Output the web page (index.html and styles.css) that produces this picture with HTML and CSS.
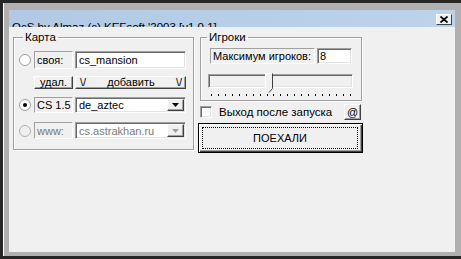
FILE: index.html
```html
<!DOCTYPE html>
<html lang="ru">
<head>
    <meta charset="UTF-8">
    <title>OcS by Almaz</title>
    <link rel="stylesheet" href="styles.css">
</head>
<body>
    <div class="window">
        <div class="titlebar">
            <span class="title">OcS by Almaz (c) KEFsoft '2003 [v1.0.1]</span>
            <span class="close">
                <svg width="8" height="7" viewBox="0 0 8 7"><path d="M0.5 0.5 L7.5 6.5 M7.5 0.5 L0.5 6.5" stroke="#000" stroke-width="1.7"/></svg>
            </span>
        </div>

        <div class="client">
            <fieldset class="group map">
                <legend>Карта</legend>
                <div class="row r1">
                    <svg class="radio" viewBox="0 0 12 12"><circle cx="6" cy="6" r="5.5" fill="#fff" stroke="#9a9a9a"/></svg>
                    <span class="static">своя:</span>
                    <span class="edit">cs_mansion</span>
                </div>
                <div class="row r2">
                    <span class="btn small">удал.</span>
                    <span class="btn wide"><span>\/</span><span>добавить</span><span>\/</span></span>
                </div>
                <div class="row r3">
                    <svg class="radio" viewBox="0 0 12 12"><circle cx="6" cy="6" r="5.5" fill="#fff" stroke="#9a9a9a"/><circle cx="6" cy="6" r="2" fill="#000"/></svg>
                    <span class="static">CS 1.5</span>
                    <span class="edit combo">de_aztec
                        <span class="drop"><svg width="7" height="4" viewBox="0 0 7 4"><polygon points="0,0 7,0 3.5,4" fill="#000"/></svg></span>
                    </span>
                </div>
                <div class="row r4 dis">
                    <svg class="radio" viewBox="0 0 12 12"><circle cx="6" cy="6" r="5.5" fill="#f0f0f0" stroke="#b0b0b0"/></svg>
                    <span class="static">www:</span>
                    <span class="edit combo">cs.astrakhan.ru
                        <span class="drop"><svg width="7" height="4" viewBox="0 0 7 4"><polygon points="0,0 7,0 3.5,4" fill="#a0a0a0"/></svg></span>
                    </span>
                </div>
            </fieldset>

            <div class="side">
                <fieldset class="group players">
                    <legend>Игроки</legend>
                    <div class="row max">
                        <span class="static">Максимум игроков:</span>
                        <span class="edit">8</span>
                    </div>
                    <div class="slider">
                        <svg class="thumb" width="8" height="20" viewBox="0 0 8 20">
                            <polygon points="0.5,0.5 7.5,0.5 7.5,15.5 4,19.5 0.5,15.5" fill="#f0f0f0"/>
                            <path d="M0.5 15.5 V0.5 H7" stroke="#fff" fill="none"/>
                            <path d="M7.5 0.5 V15.5 L4 19.5" stroke="#404040" fill="none"/>
                        </svg>
                    </div>
                    <div class="ticks">
                        <i></i><i></i><i></i><i></i><i></i><i></i><i></i><i></i><i></i><i></i><i></i>
                        <i></i><i></i><i></i><i></i><i></i><i></i><i></i><i></i><i></i><i></i>
                    </div>
                </fieldset>

                <div class="exit-row">
                    <span class="check"></span>
                    <span class="exit-label">Выход после запуска</span>
                    <span class="btn at">@</span>
                </div>

                <div class="go"><span class="focus">ПОЕХАЛИ</span></div>
            </div>
        </div>
    </div>
</body>
</html>
```

FILE: styles.css
```css
body {
    margin: 0;
    height: 259px;
    overflow: hidden;
    background-color: #262626;
    font-family: 'Liberation Sans', Arial, sans-serif;
    font-size: 11px;
    color: #000;
}

.window {
    margin: 3px 0 0 3px;
    height: 253px;
    box-sizing: border-box;
    border-left: 1px solid #fff;
    background-color: #b0b0b0;
    padding: 7px 6px 4px 5px;
    display: flex;
    flex-direction: column;
}

.titlebar {
    height: 17px;
    overflow: hidden;
    display: flex;
    align-items: flex-start;
    background: linear-gradient(90deg, #b1c9e4, #bcd3ea);
}

.title {
    flex: 1;
    padding: 13px 0 0 3px;
    font-size: 11.5px;
    line-height: 8px;
    white-space: nowrap;
}

.close {
    margin: 4px 3px 0 0;
    width: 16px;
    height: 11px;
    box-sizing: border-box;
    background-color: #eef1f4;
    border: 1px solid;
    border-color: #fff #404040 #404040 #fff;
    display: flex;
    align-items: center;
    justify-content: center;
}

.client {
    flex: 1;
    background-color: #f0f0f0;
    padding: 4px 0 0 4px;
    display: grid;
    grid-template-columns: 181px 165px;
    column-gap: 4px;
    align-items: start;
}

.group {
    margin: 0;
    padding: 0;
    min-width: 0;
    border: 1px solid #a0a0a0;
    box-shadow: 1px 1px 0 #fff, inset 1px 1px 0 #fff;
}

legend {
    padding: 0 2px;
    font-size: 11.5px;
    line-height: 12px;
}

.map legend {
    margin-left: 9px;
}

.row {
    display: flex;
    align-items: stretch;
}

.r1 { margin-top: 8px; height: 18px; }
.r2 { margin-top: 7px; height: 13px; padding-left: 20px; }
.r3 { margin-top: 8px; height: 16px; }
.r4 { margin-top: 9px; height: 17px; margin-bottom: 10px; }

.radio {
    align-self: center;
    width: 12px;
    height: 12px;
    margin: 0 3px 0 5px;
    flex: none;
}

.static {
    width: 39px;
    box-sizing: border-box;
    border: 1px solid;
    border-color: #a0a0a0 #fff #fff #a0a0a0;
    padding-left: 2px;
    margin-right: 2px;
    display: flex;
    align-items: center;
    white-space: nowrap;
    overflow: hidden;
}

.edit {
    width: 111px;
    box-sizing: border-box;
    background-color: #fff;
    border: 1px solid;
    border-color: #a0a0a0 #fff #fff #a0a0a0;
    box-shadow: inset 1px 1px 0 #696969, inset -1px -1px 0 #e3e3e3;
    padding-left: 3px;
    display: flex;
    align-items: center;
    white-space: nowrap;
}

.drop {
    margin: 1px 1px 1px auto;
    align-self: stretch;
    width: 17px;
    box-sizing: border-box;
    background-color: #f0f0f0;
    border: 1px solid;
    border-color: #fff #404040 #404040 #fff;
    box-shadow: inset -1px -1px 0 #a0a0a0;
    display: flex;
    align-items: center;
    justify-content: center;
}

.dis {
    color: #7a7a7a;
}

.btn {
    box-sizing: border-box;
    background-color: #f0f0f0;
    border: 1px solid;
    border-color: #fff #404040 #404040 #fff;
    box-shadow: inset -1px -1px 0 #a0a0a0;
    display: flex;
    align-items: center;
    justify-content: center;
    line-height: 11px;
}

.btn.small {
    width: 39px;
    margin-right: 2px;
}

.btn.wide {
    width: 111px;
    justify-content: space-between;
    padding: 0 3px 0 4px;
}

.players {
    margin-left: 2px;
    width: 162px;
    box-sizing: border-box;
}

.players legend {
    margin-left: 6px;
}

.max {
    margin: 5px 0 0 9px;
    height: 16px;
}

.max .static {
    width: 105px;
}

.max .edit {
    width: 35px;
    padding-left: 2px;
}

.slider {
    position: relative;
    margin: 10px 0 0 7px;
    width: 145px;
    height: 14px;
    box-sizing: border-box;
    border: 1px solid;
    border-color: #a0a0a0 #fff #fff #a0a0a0;
    box-shadow: inset 1px 1px 0 #696969, inset -1px -1px 0 #e3e3e3;
}

.thumb {
    position: absolute;
    left: 56px;
    top: -2px;
}

.ticks {
    display: flex;
    justify-content: space-between;
    width: 140px;
    height: 2px;
    margin: 6px 0 4px 10px;
}

.ticks i {
    width: 1px;
    height: 2px;
    background-color: #000;
}

.exit-row {
    margin-top: 3px;
    height: 16px;
    display: flex;
    align-items: center;
}

.check {
    margin-left: 2px;
    width: 12px;
    height: 12px;
    box-sizing: border-box;
    background-color: #fff;
    border: 1px solid;
    border-color: #a0a0a0 #fff #fff #a0a0a0;
    box-shadow: inset 1px 1px 0 #696969, inset -1px -1px 0 #e3e3e3;
}

.exit-label {
    margin-left: 7px;
    white-space: nowrap;
    font-size: 11.5px;
}

.btn.at {
    margin: 0 2px 0 auto;
    width: 17px;
    height: 16px;
}

.go {
    margin-top: 3px;
    height: 30px;
    box-sizing: border-box;
    border: 1px solid #000;
    background-color: #f0f0f0;
    box-shadow: inset 1px 1px 0 #fff, inset -1px -1px 0 #404040, inset -2px -2px 0 #a0a0a0;
    display: flex;
    padding: 3px 4px 3px 3px;
}

.focus {
    flex: 1;
    border: 1px dotted #000;
    display: flex;
    align-items: center;
    justify-content: center;
}
```
